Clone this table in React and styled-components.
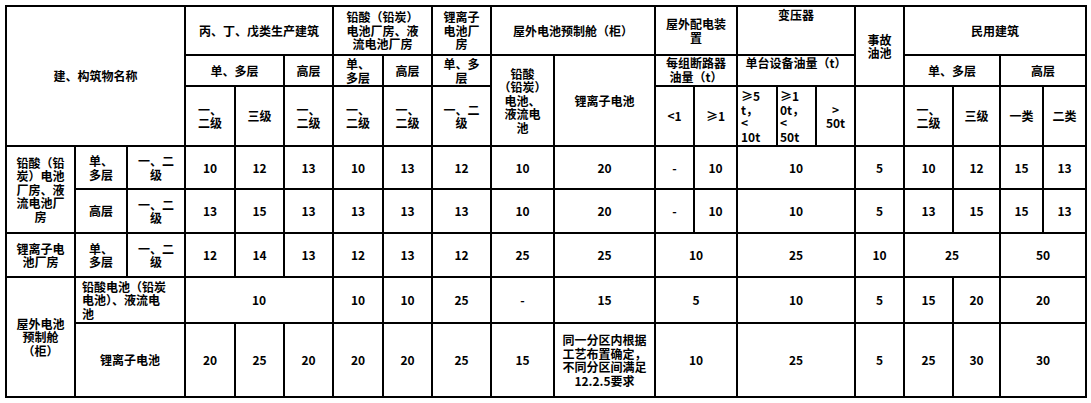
import React from "react";
import styled, { createGlobalStyle } from "styled-components";

const Global = createGlobalStyle`
  html, body { margin: 0; padding: 0; background: #fff; }
  body { font-family: "Noto Sans CJK SC", "Noto Sans", sans-serif; color: #000; }
`;

const Page = styled.div`
  padding: 5px;
`;

const Grid = styled.div`
  display: grid;
  grid-template-columns: 67px 50px 56px 48px 47px 47px 48px 47px 57px 61px 99px 37px 41px 38px 37px 37px 47px 47px 45px 41px 41px;
  grid-template-rows: 47px 29px 58px 41px 42px 42px 44px 72px;
  gap: 2px;
  padding: 2px;
  background: #000;
  width: max-content;
`;

const Cell = styled.div`
  grid-column: ${(p) => p.$c} / span ${(p) => p.$cs || 1};
  grid-row: ${(p) => p.$r} / span ${(p) => p.$rs || 1};
  background: #fff;
  display: flex;
  align-items: ${(p) => (p.$top ? "flex-start" : "center")};
  justify-content: ${(p) => (p.$left ? "flex-start" : "center")};
  padding-left: ${(p) => (p.$left ? `${p.$left}px` : "0")};
  padding-top: ${(p) => (p.$top ? `${p.$top - 1}px` : "0")};
  overflow: visible;
`;

const Label = styled.span`
  display: block;
  font-size: 12px;
  line-height: 13.5px;
  font-weight: 700;
  white-space: nowrap;
  text-align: ${(p) => (p.$left ? "left" : "center")};
`;

// [col, colSpan, row, rowSpan, text (| = line break), opts]
const cells = [
  // header row 1
  [1, 3, 1, 3, "建、构筑物名称"],
  [4, 3, 1, 1, "丙、丁、戊类生产建筑"],
  [7, 2, 1, 1, "铅酸（铅炭）|电池厂房、液|流电池厂房"],
  [9, 1, 1, 1, "锂离子|电池厂|房"],
  [10, 2, 1, 1, "屋外电池预制舱（柜）"],
  [12, 2, 1, 1, "屋外配电装|置"],
  [14, 3, 1, 1, "变压器", { top: 2 }],
  [17, 1, 1, 2, "事故|油池"],
  [18, 4, 1, 1, "民用建筑"],
  // header row 2
  [4, 2, 2, 1, "单、多层"],
  [6, 1, 2, 1, "高层"],
  [7, 1, 2, 1, "单、|多层"],
  [8, 1, 2, 1, "高层"],
  [9, 1, 2, 1, "单、多|层"],
  [10, 1, 2, 2, "铅酸|（铅炭）|电池、|液流电|池"],
  [11, 1, 2, 2, "锂离子电池"],
  [12, 2, 2, 1, "每组断路器|油量（t）", { top: 1 }],
  [14, 3, 2, 1, "单台设备油量（t）", { top: 1 }],
  [18, 2, 2, 1, "单、多层"],
  [20, 2, 2, 1, "高层"],
  // header row 3
  [4, 1, 3, 1, "一、|二级"],
  [5, 1, 3, 1, "三级"],
  [6, 1, 3, 1, "一、|二级"],
  [7, 1, 3, 1, "一、|二级"],
  [8, 1, 3, 1, "一、|二级"],
  [9, 1, 3, 1, "一、二|级"],
  [12, 1, 3, 1, "<1"],
  [13, 1, 3, 1, "≥1"],
  [14, 1, 3, 1, "≥5|t，|<|10t", { left: 3 }],
  [15, 1, 3, 1, "≥1|0t，|<|50t", { left: 2 }],
  [16, 1, 3, 1, ">|50t"],
  [17, 1, 3, 1, ""],
  [18, 1, 3, 1, "一、|二级"],
  [19, 1, 3, 1, "三级"],
  [20, 1, 3, 1, "一类"],
  [21, 1, 3, 1, "二类"],
  // body row 4
  [1, 1, 4, 2, "铅酸（铅|炭）电池|厂房、液|流电池厂|房"],
  [2, 1, 4, 1, "单、|多层"],
  [3, 1, 4, 1, "一、二|级"],
  [4, 1, 4, 1, "10"],
  [5, 1, 4, 1, "12"],
  [6, 1, 4, 1, "13"],
  [7, 1, 4, 1, "10"],
  [8, 1, 4, 1, "13"],
  [9, 1, 4, 1, "12"],
  [10, 1, 4, 1, "10"],
  [11, 1, 4, 1, "20"],
  [12, 1, 4, 1, "-"],
  [13, 1, 4, 1, "10"],
  [14, 3, 4, 1, "10"],
  [17, 1, 4, 1, "5"],
  [18, 1, 4, 1, "10"],
  [19, 1, 4, 1, "12"],
  [20, 1, 4, 1, "15"],
  [21, 1, 4, 1, "13"],
  // body row 5
  [2, 1, 5, 1, "高层"],
  [3, 1, 5, 1, "一、二|级"],
  [4, 1, 5, 1, "13"],
  [5, 1, 5, 1, "15"],
  [6, 1, 5, 1, "13"],
  [7, 1, 5, 1, "13"],
  [8, 1, 5, 1, "13"],
  [9, 1, 5, 1, "13"],
  [10, 1, 5, 1, "10"],
  [11, 1, 5, 1, "20"],
  [12, 1, 5, 1, "-"],
  [13, 1, 5, 1, "10"],
  [14, 3, 5, 1, "10"],
  [17, 1, 5, 1, "5"],
  [18, 1, 5, 1, "13"],
  [19, 1, 5, 1, "15"],
  [20, 1, 5, 1, "15"],
  [21, 1, 5, 1, "13"],
  // body row 6
  [1, 1, 6, 1, "锂离子电|池厂房"],
  [2, 1, 6, 1, "单、|多层"],
  [3, 1, 6, 1, "一、二|级"],
  [4, 1, 6, 1, "12"],
  [5, 1, 6, 1, "14"],
  [6, 1, 6, 1, "13"],
  [7, 1, 6, 1, "12"],
  [8, 1, 6, 1, "13"],
  [9, 1, 6, 1, "12"],
  [10, 1, 6, 1, "25"],
  [11, 1, 6, 1, "25"],
  [12, 2, 6, 1, "10"],
  [14, 3, 6, 1, "25"],
  [17, 1, 6, 1, "10"],
  [18, 2, 6, 1, "25"],
  [20, 2, 6, 1, "50"],
  // body row 7
  [1, 1, 7, 2, "屋外电池|预制舱|（柜）"],
  [2, 2, 7, 1, "铅酸电池（铅炭|电池）、液流电|池", { left: 6 }],
  [4, 3, 7, 1, "10"],
  [7, 1, 7, 1, "10"],
  [8, 1, 7, 1, "10"],
  [9, 1, 7, 1, "25"],
  [10, 1, 7, 1, "-"],
  [11, 1, 7, 1, "15"],
  [12, 2, 7, 1, "5"],
  [14, 3, 7, 1, "10"],
  [17, 1, 7, 1, "5"],
  [18, 1, 7, 1, "15"],
  [19, 1, 7, 1, "20"],
  [20, 2, 7, 1, "20"],
  // body row 8
  [2, 2, 8, 1, "锂离子电池"],
  [4, 1, 8, 1, "20"],
  [5, 1, 8, 1, "25"],
  [6, 1, 8, 1, "20"],
  [7, 1, 8, 1, "20"],
  [8, 1, 8, 1, "20"],
  [9, 1, 8, 1, "25"],
  [10, 1, 8, 1, "15"],
  [11, 1, 8, 1, "同一分区内根据|工艺布置确定，|不同分区间满足|12.2.5要求"],
  [12, 2, 8, 1, "10"],
  [14, 3, 8, 1, "25"],
  [17, 1, 8, 1, "5"],
  [18, 1, 8, 1, "25"],
  [19, 1, 8, 1, "30"],
  [20, 2, 8, 1, "30"],
];

function Lines({ text, left }) {
  const parts = text.split("|");
  return (
    <Label $left={left}>
      {parts.map((t, i) => (
        <React.Fragment key={i}>
          {i > 0 && <br />}
          {t}
        </React.Fragment>
      ))}
    </Label>
  );
}

export default function App() {
  return (
    <>
      <Global />
      <Page>
        <Grid>
          {cells.map(([c, cs, r, rs, text, opts = {}], i) => (
            <Cell key={i} $c={c} $cs={cs} $r={r} $rs={rs} $top={opts.top} $left={opts.left}>
              {text && <Lines text={text} left={!!opts.left} />}
            </Cell>
          ))}
        </Grid>
      </Page>
    </>
  );
}
